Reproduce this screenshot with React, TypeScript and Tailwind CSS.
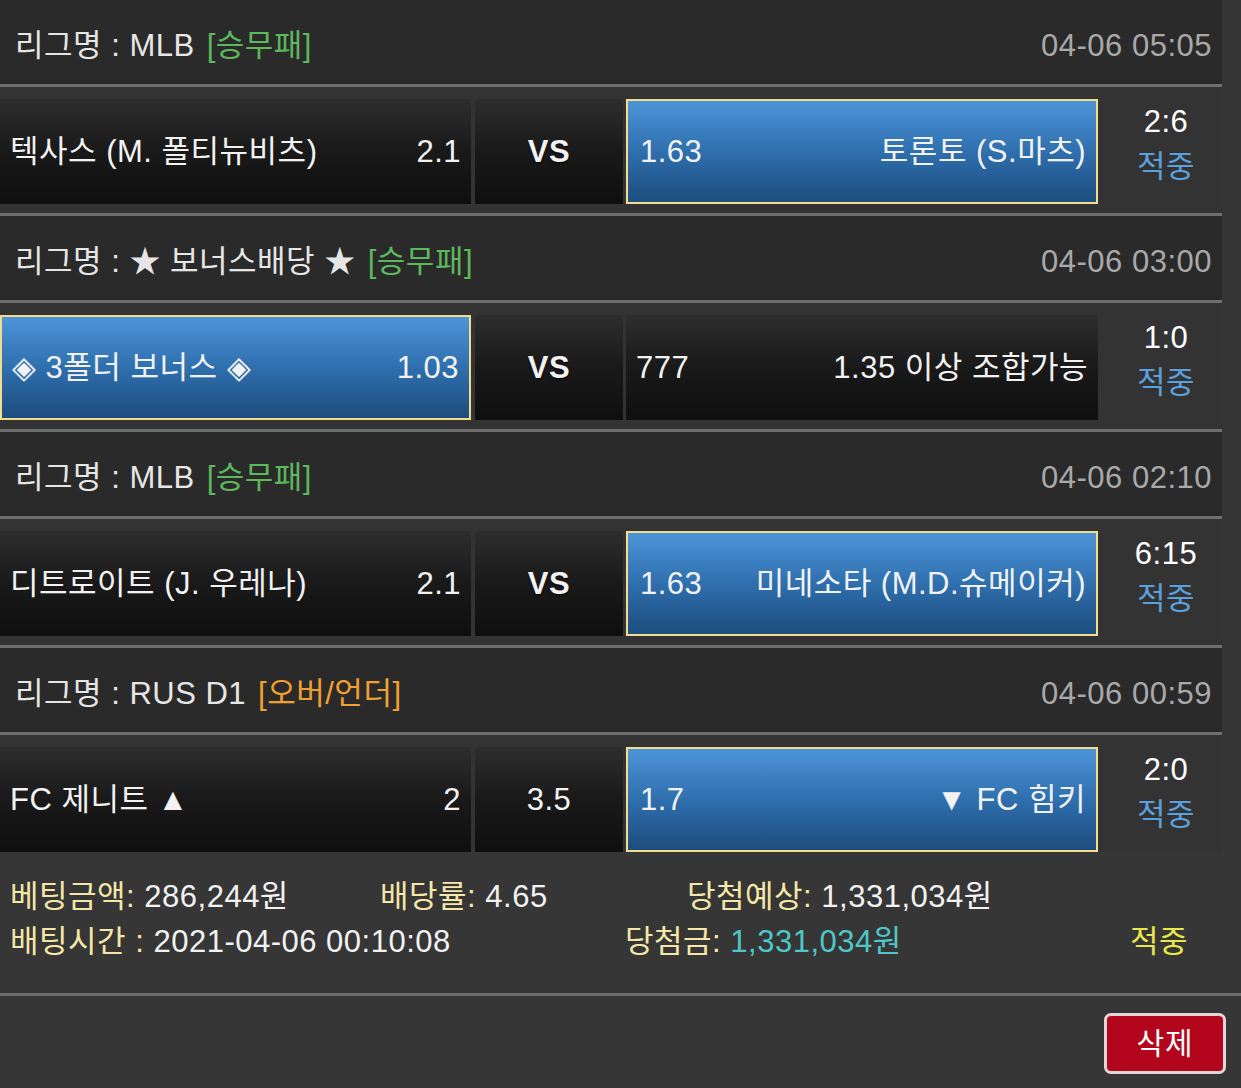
const GREEN = "text-[#5cb85c]";
const ORANGE = "text-[#f0a030]";

const bets = [
  {
    league: "MLB",
    tag: "[승무패]",
    tagClass: GREEN,
    date: "04-06 05:05",
    home: "텍사스 (M. 폴티뉴비츠)",
    homeOdds: "2.1",
    mid: "VS",
    awayOdds: "1.63",
    away: "토론토 (S.마츠)",
    pick: "away",
    score: "2:6",
  },
  {
    league: "★ 보너스배당 ★",
    tag: "[승무패]",
    tagClass: GREEN,
    date: "04-06 03:00",
    home: "◈ 3폴더 보너스 ◈",
    homeOdds: "1.03",
    mid: "VS",
    awayOdds: "777",
    away: "1.35 이상 조합가능",
    pick: "home",
    score: "1:0",
  },
  {
    league: "MLB",
    tag: "[승무패]",
    tagClass: GREEN,
    date: "04-06 02:10",
    home: "디트로이트 (J. 우레나)",
    homeOdds: "2.1",
    mid: "VS",
    awayOdds: "1.63",
    away: "미네소타 (M.D.슈메이커)",
    pick: "away",
    score: "6:15",
  },
  {
    league: "RUS D1",
    tag: "[오버/언더]",
    tagClass: ORANGE,
    date: "04-06 00:59",
    home: "FC 제니트 ▲",
    homeOdds: "2",
    mid: "3.5",
    awayOdds: "1.7",
    away: "▼ FC 힘키",
    pick: "away",
    score: "2:0",
  },
];

const blue =
  "bg-linear-to-b from-[#4c95d8] via-[#2f6fae] to-[#1c4d7e] border-2 border-[#f3dc8e]";
const dark = "bg-linear-to-b from-[#2e2e2e] via-[#191919] to-[#0f0f0f]";

export default function App() {
  return (
    <div className="min-h-screen w-full bg-[#363636] font-['Liberation_Sans','Noto_Sans_CJK_KR',sans-serif] text-[31px] tracking-[0.5px] text-[#f2f2f2]">
      <div className="w-[1222px]">
        {bets.map((b, i) => {
          const last = i === bets.length - 1;
          return (
            <div key={i}>
              <div className="h-[84px] bg-[#2a2a2a] flex items-center justify-between pl-[15px] pr-[10px] pt-[8px]">
                <div className="flex items-center">
                  <span className="text-[#e6e6e6]">리그명 : {b.league}</span>
                  <span className={`ml-[12px] ${b.tagClass}`}>{b.tag}</span>
                </div>
                <span className="text-[#a9a9a9]">{b.date}</span>
              </div>
              <div className="h-[3px] bg-[#6e6e6e]" />
              <div className={`${last ? "h-[117px]" : "h-[126px]"} bg-[#333333] flex pt-[12px]`}>
                <div
                  className={`w-[471px] h-[105px] flex items-center justify-between pl-[10px] pr-[10px] pt-[2px] ${
                    b.pick === "home" ? blue : dark
                  }`}
                >
                  <span>{b.home}</span>
                  <span>{b.homeOdds}</span>
                </div>
                <div className={`ml-[4px] w-[148px] h-[105px] flex items-center justify-center pt-[2px] ${dark}`}>
                  <span className={b.mid === "VS" ? "font-bold [text-shadow:0_1px_2px_#000]" : ""}>{b.mid}</span>
                </div>
                <div
                  className={`ml-[3px] w-[472px] h-[105px] flex items-center justify-between pr-[10px] pt-[2px] ${
                    b.pick === "away" ? `${blue} pl-[12px]` : `${dark} pl-[10px]`
                  }`}
                >
                  <span>{b.awayOdds}</span>
                  <span>{b.away}</span>
                </div>
                <div className="flex-1 flex flex-col items-center pl-[12px] leading-[45px]">
                  <span className="text-white">{b.score}</span>
                  <span className="text-[#5b9fdc]">적중</span>
                </div>
              </div>
              {!last && <div className="h-[3px] bg-[#6e6e6e]" />}
            </div>
          );
        })}
      </div>

      <div className="h-[141px] pt-[22px] pl-[10px] leading-[45px]">
        <div className="flex">
          <div className="w-[370px]">
            <span className="text-[#f4e7a8]">베팅금액:</span> 286,244원
          </div>
          <div className="w-[307px]">
            <span className="text-[#f4e7a8]">배당률:</span> 4.65
          </div>
          <div>
            <span className="text-[#f4e7a8]">당첨예상:</span> 1,331,034원
          </div>
        </div>
        <div className="flex">
          <div className="w-[615px]">
            <span className="text-[#f4e7a8]">배팅시간 :</span> 2021-04-06 00:10:08
          </div>
          <div className="w-[505px]">
            <span className="text-[#f4e7a8]">당첨금:</span>{" "}
            <span className="text-[#4fc7c7]">1,331,034원</span>
          </div>
          <div className="text-[#e8e84a]">적중</div>
        </div>
      </div>
      <div className="h-[3px] bg-[#6e6e6e]" />
      <div className="flex justify-end pt-[17px] pr-[15px] pb-[15px]">
        <button className="w-[122px] h-[61px] rounded-[7px] border-[3px] border-[#e3d6d6] bg-[#b3061d] text-white text-[30px] tracking-[1px] flex items-center justify-center">
          삭제
        </button>
      </div>
    </div>
  );
}
